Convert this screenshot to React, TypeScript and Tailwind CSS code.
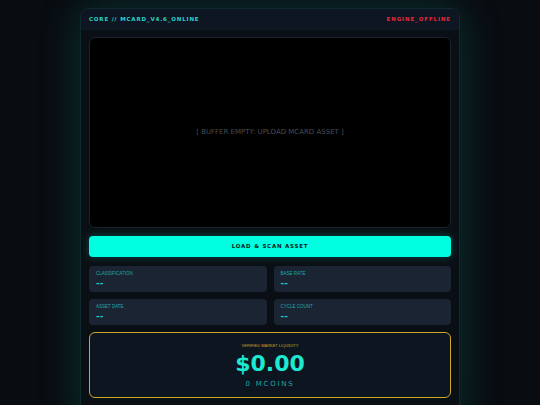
import React from 'react';

const stats = [
  { label: 'CLASSIFICATION', value: '--' },
  { label: 'BASE RATE', value: '--' },
  { label: 'ASSET DATE', value: '--' },
  { label: 'CYCLE COUNT', value: '--' },
];

const App: React.FC = () => (
  <div className="h-[405px] overflow-hidden bg-[#090c11] pt-2" style={{ fontFamily: '"DejaVu Sans", sans-serif' }}>
    <div className="mx-auto w-[380px] h-[420px] rounded-lg border border-[#0e2a2c] bg-[#0a0f15] shadow-[0_0_45px_rgba(0,230,200,0.18)] overflow-hidden">
      <div className="h-[21px] px-[8px] flex items-center justify-between bg-[#0e1623] border-b border-[#0c1a22]">
        <span className="text-[5.5px] font-bold tracking-[0.15em] text-[#27d3cc]">
          CORE // MCARD_V4.6_ONLINE
        </span>
        <span className="text-[5.5px] font-bold tracking-[0.16em] text-[#e5283a]">
          ENGINE_OFFLINE
        </span>
      </div>
      <div className="px-[8px] pt-[7px] flex flex-col gap-[8px]">
        <div className="h-[191px] rounded-md border border-[#1a222c] bg-black flex items-center justify-center">
          <span className="text-[7px] text-[#474d59]">[ BUFFER EMPTY: UPLOAD MCARD ASSET ]</span>
        </div>
        <button className="h-[21px] rounded bg-[#00ffe0] flex items-center justify-center shadow-[0_0_8px_rgba(0,255,224,0.25)]">
          <span className="text-[5.5px] font-bold tracking-[0.14em] text-[#0b1a1a]">LOAD &amp; SCAN ASSET</span>
        </button>
        <div className="grid grid-cols-2 gap-[7px] mt-px">
          {stats.map((s) => (
            <div key={s.label} className="h-[26px] rounded bg-[#1b2433] px-[7px] pt-[6px]">
              <div className="text-[4.5px] leading-none text-[#1fa9a3]" style={{ fontFamily: '"Liberation Sans", sans-serif' }}>{s.label}</div>
              <div className="mt-[2px] text-[9px] leading-none font-bold text-[#22c8c0]">{s.value}</div>
            </div>
          ))}
        </div>
        <div className="h-[66px] rounded-md border border-[#c9a92a] bg-[#0c1520] flex flex-col items-center pt-[11px] -mt-px">
          <div className="text-[4px] leading-none text-[#c9a92a]" style={{ fontFamily: '"Liberation Sans", sans-serif' }}>VERIFIED MARKET LIQUIDITY</div>
          <div className="mt-[5px] text-[22px] leading-none font-bold text-[#1de8d0]">$0.00</div>
          <div className="mt-[6px] text-[7px] leading-none tracking-[0.25em] text-[#1aa7a0]">0 MCOINS</div>
        </div>
      </div>
    </div>
  </div>
);

export default App;
